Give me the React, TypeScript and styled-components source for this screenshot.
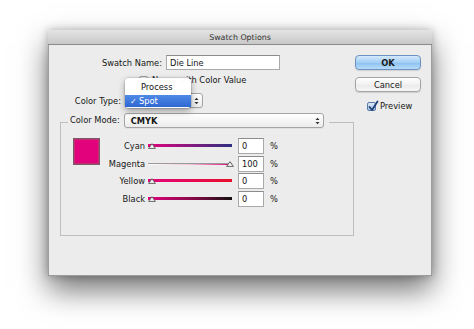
import React from "react";
import styled, { createGlobalStyle } from "styled-components";

const Global = createGlobalStyle`
  html, body { margin: 0; padding: 0; background: #ffffff; }
  body { font-family: "DejaVu Sans", "Liberation Sans", sans-serif; color: #161616; }
  * { box-sizing: border-box; }
`;

const Page = styled.div`
  width: 474px;
  height: 329px;
  padding: 30px 0 0 48px;
  background: #fff;
  overflow: hidden;
`;

const Window = styled.div`
  width: 384px;
  height: 246px;
  background: #ececec;
  border: 1px solid #9c9c9c;
  border-top: none;
  box-shadow: 0 14px 28px rgba(0, 0, 0, 0.55), 0 0 8px rgba(0, 0, 0, 0.25);
  display: flex;
  flex-direction: column;
`;

const TitleBar = styled.div`
  height: 15px;
  flex: none;
  background: linear-gradient(#e4e4e4, #c8c8c8);
  border-bottom: 1px solid #8a8a8a;
  display: flex;
  align-items: center;
  justify-content: center;
  font-size: 7.9px;
  color: #333;
  margin: 0 -1px;
`;

const Body = styled.div`
  display: flex;
  padding: 9px 10px 0 11px;
`;

const LeftCol = styled.div`
  width: 294px;
  display: flex;
  flex-direction: column;
`;

const RightCol = styled.div`
  width: 66px;
  margin-left: auto;
  display: flex;
  flex-direction: column;
  align-items: stretch;
`;

const Row = styled.div<{ $mt?: number; $h?: number; $pl?: number }>`
  display: flex;
  align-items: center;
  margin-top: ${(p) => p.$mt ?? 0}px;
  height: ${(p) => p.$h ?? 15}px;
  padding-left: ${(p) => p.$pl ?? 0}px;
`;

const Label = styled.div<{ $w: number; $gap: number }>`
  width: ${(p) => p.$w}px;
  margin-right: ${(p) => p.$gap}px;
  text-align: right;
  font-size: 8.3px;
  white-space: nowrap;
  flex: none;
`;

const TextField = styled.div<{ $w: number; $h?: number }>`
  width: ${(p) => p.$w}px;
  height: ${(p) => p.$h ?? 15}px;
  background: #fff;
  border: 1px solid #a9a9a9;
  border-top-color: #8c8c8c;
  font-size: 8.3px;
  display: flex;
  align-items: center;
  padding-left: 3px;
  flex: none;
`;

const CheckBox = styled.div<{ $checked?: boolean }>`
  width: 9px;
  height: 9px;
  border: 1px solid ${(p) => (p.$checked ? "#5a7aa8" : "#9a9a9a")};
  border-radius: 2px;
  background: ${(p) =>
    p.$checked ? "linear-gradient(#dbe8f6, #a9c6e8)" : "linear-gradient(#ffffff, #eeeeee)"};
  position: relative;
  flex: none;
`;

const CheckMark = styled.svg`
  position: absolute;
  left: 0px;
  top: -3px;
`;

const SmallText = styled.span`
  font-size: 8.3px;
  margin-left: 4px;
  white-space: nowrap;
`;

const SelectWrap = styled.div<{ $w: number }>`
  position: relative;
  width: ${(p) => p.$w}px;
  height: 15px;
  flex: none;
`;

const SelectBox = styled.div`
  width: 100%;
  height: 100%;
  border: 1px solid #a4a4a4;
  border-radius: 3px;
  background: linear-gradient(#ffffff, #ececec);
  display: flex;
  align-items: center;
  padding-left: 6px;
  font-size: 8.3px;
  font-weight: bold;
  box-shadow: 0 1px 0 rgba(0, 0, 0, 0.05);
`;

const Stepper = styled.div`
  position: absolute;
  right: 0;
  top: 0;
  width: 13px;
  height: 15px;
  display: flex;
  align-items: center;
  justify-content: center;
`;

const Menu = styled.div`
  position: absolute;
  left: -1px;
  top: -15px;
  width: 66px;
  height: 30px;
  background: rgba(255, 255, 255, 0.98);
  border-radius: 4px;
  box-shadow: 0 3px 7px rgba(0, 0, 0, 0.35), 0 0 0 1px rgba(0, 0, 0, 0.1);
  padding-top: 3px;
  z-index: 2;
`;

const MenuItem = styled.div<{ $active?: boolean }>`
  position: relative;
  height: 12px;
  margin-top: ${(p) => (p.$active ? 2 : 0)}px;
  display: flex;
  align-items: center;
  padding-left: ${(p) => (p.$active ? 14 : 16)}px;
  font-size: 8.3px;
  color: ${(p) => (p.$active ? "#fff" : "#111")};
  background: ${(p) => (p.$active ? "linear-gradient(#4f8ae6, #2f67d2)" : "transparent")};
`;

const MenuCheck = styled.span`
  position: absolute;
  left: 5px;
  font-size: 8px;
`;

const Group = styled.fieldset`
  margin: 5px 0 0 0;
  padding: 7px 0 0 12px;
  width: 294px;
  height: 123px;
  border: 1px solid #bdbdbd;
  border-radius: 0;
  min-width: 0;
`;

const Legend = styled.legend`
  margin-left: -5px;
  padding: 0 5px 4px 2px;
  display: flex;
  height: 18px;
  align-items: flex-start;
`;

const LegendLabel = styled.span`
  font-size: 8.3px;
  margin-right: 4px;
  line-height: 14px;
  white-space: nowrap;
`;

const GroupInner = styled.div`
  display: flex;
  align-items: flex-start;
`;

const Swatch = styled.div`
  width: 27px;
  height: 27px;
  border: 1px solid #7a5a6a;
  background: #e2037c;
  box-shadow: inset 0 0 0 1px #c0306e;
  flex: none;
`;

const Sliders = styled.div`
  display: grid;
  grid-template-columns: 45px 93px 26px 14px;
  grid-auto-rows: 16px;
  row-gap: 1.5px;
`;

const SliderLabel = styled.div`
  font-size: 8.3px;
  text-align: right;
  align-self: center;
  white-space: nowrap;
`;

const TrackArea = styled.div`
  position: relative;
  align-self: center;
  height: 16px;
  margin-right: 6px;
  margin-left: 3px;
`;

const Track = styled.div<{ $grad: string; $thin?: boolean }>`
  position: absolute;
  left: 0;
  right: 0;
  top: ${(p) => (p.$thin ? 7 : 6)}px;
  height: ${(p) => (p.$thin ? 2 : 3)}px;
  background: ${(p) => p.$grad};
  border-top: ${(p) => (p.$thin ? "1px solid #9a9a9a" : "none")};
`;

const Thumb = styled.svg<{ $pos: number }>`
  position: absolute;
  top: 5px;
  left: ${(p) => p.$pos}%;
  margin-left: ${(p) => (p.$pos > 50 ? -6 : 0)}px;
`;

const Pct = styled.div`
  font-size: 8.3px;
  align-self: center;
  padding-left: 6px;
`;

const Button = styled.div<{ $primary?: boolean; $mt?: number }>`
  height: 15px;
  margin-top: ${(p) => p.$mt ?? 0}px;
  border-radius: 4px;
  border: 1px solid ${(p) => (p.$primary ? "#6b92c2" : "#a3a3a3")};
  background: ${(p) =>
    p.$primary
      ? "linear-gradient(#d3e9fc, #a3cef4 50%, #8cc1f1 51%, #b6dbf8)"
      : "linear-gradient(#ffffff, #f1f1f1 50%, #e9e9e9 51%, #f7f7f7)"};
  display: flex;
  align-items: center;
  justify-content: center;
  font-size: 8.3px;
  font-weight: ${(p) => (p.$primary ? "bold" : "normal")};
  color: #1a1a1a;
  box-shadow: 0 1px 1px rgba(0, 0, 0, 0.12);
`;

const PreviewRow = styled.div`
  display: flex;
  align-items: center;
  margin-top: 8px;
  padding-left: 12px;
  height: 12px;
`;

const UpDown = () => (
  <svg width="5" height="8" viewBox="0 0 5 8">
    <path d="M0.5 3 L2.5 0.8 L4.5 3 Z" fill="#333" />
    <path d="M0.5 5 L2.5 7.2 L4.5 5 Z" fill="#333" />
  </svg>
);

const ThumbIcon = ({ pos }: { pos: number }) => (
  <Thumb $pos={pos} width="8" height="6" viewBox="0 0 8 6">
    <path d="M4 0.7 L7.4 5.4 L0.6 5.4 Z" fill="#f6f6f6" stroke="#555" strokeWidth="0.9" />
  </Thumb>
);

const sliders = [
  { name: "Cyan", value: "0", pos: 0, grad: "linear-gradient(90deg, #e2037c, #2c2f80)" },
  { name: "Magenta", value: "100", pos: 100, grad: "linear-gradient(90deg, #ffffff, #f2c4d8 50%, #e2037c)", thin: true },
  { name: "Yellow", value: "0", pos: 0, grad: "linear-gradient(90deg, #e2037c, #e8112d)" },
  { name: "Black", value: "0", pos: 0, grad: "linear-gradient(90deg, #e2037c, #7a0a40 60%, #111)" },
];

export default function App() {
  return (
    <Page>
      <Global />
      <Window>
        <TitleBar>Swatch Options</TitleBar>
        <Body>
          <LeftCol>
            <Row $mt={1}>
              <Label $w={102} $gap={4}>Swatch Name:</Label>
              <TextField $w={114}>Die Line</TextField>
            </Row>
            <Row $mt={5} $h={10} $pl={79}>
              <CheckBox />
              <SmallText>Name with Color Value</SmallText>
            </Row>
            <Row $mt={8}>
              <Label $w={61} $gap={5}>Color Type:</Label>
              <SelectWrap $w={77}>
                <SelectBox>Spot</SelectBox>
                <Stepper>
                  <UpDown />
                </Stepper>
                <Menu>
                  <MenuItem>Process</MenuItem>
                  <MenuItem $active>
                    <MenuCheck>✓</MenuCheck>Spot
                  </MenuItem>
                </Menu>
              </SelectWrap>
            </Row>
            <Group>
              <Legend>
                <LegendLabel>Color Mode:</LegendLabel>
                <SelectWrap $w={200}>
                  <SelectBox>CMYK</SelectBox>
                  <Stepper>
                    <UpDown />
                  </Stepper>
                </SelectWrap>
              </Legend>
              <GroupInner>
                <Swatch />
                <Sliders>
                  {sliders.map((s) => (
                    <React.Fragment key={s.name}>
                      <SliderLabel>{s.name}</SliderLabel>
                      <TrackArea>
                        <Track $grad={s.grad} $thin={s.thin} />
                        <ThumbIcon pos={s.pos} />
                      </TrackArea>
                      <TextField $w={26} $h={16}>{s.value}</TextField>
                      <Pct>%</Pct>
                    </React.Fragment>
                  ))}
                </Sliders>
              </GroupInner>
            </Group>
          </LeftCol>
          <RightCol>
            <Button $primary $mt={1}>OK</Button>
            <Button $mt={7}>Cancel</Button>
            <PreviewRow>
              <CheckBox $checked>
                <CheckMark width="11" height="12" viewBox="0 0 11 12">
                  <path d="M1.5 7 L4 10 L9.5 1.5" fill="none" stroke="#1d3f78" strokeWidth="1.8" strokeLinecap="round" strokeLinejoin="round" />
                </CheckMark>
              </CheckBox>
              <SmallText>Preview</SmallText>
            </PreviewRow>
          </RightCol>
        </Body>
      </Window>
    </Page>
  );
}
